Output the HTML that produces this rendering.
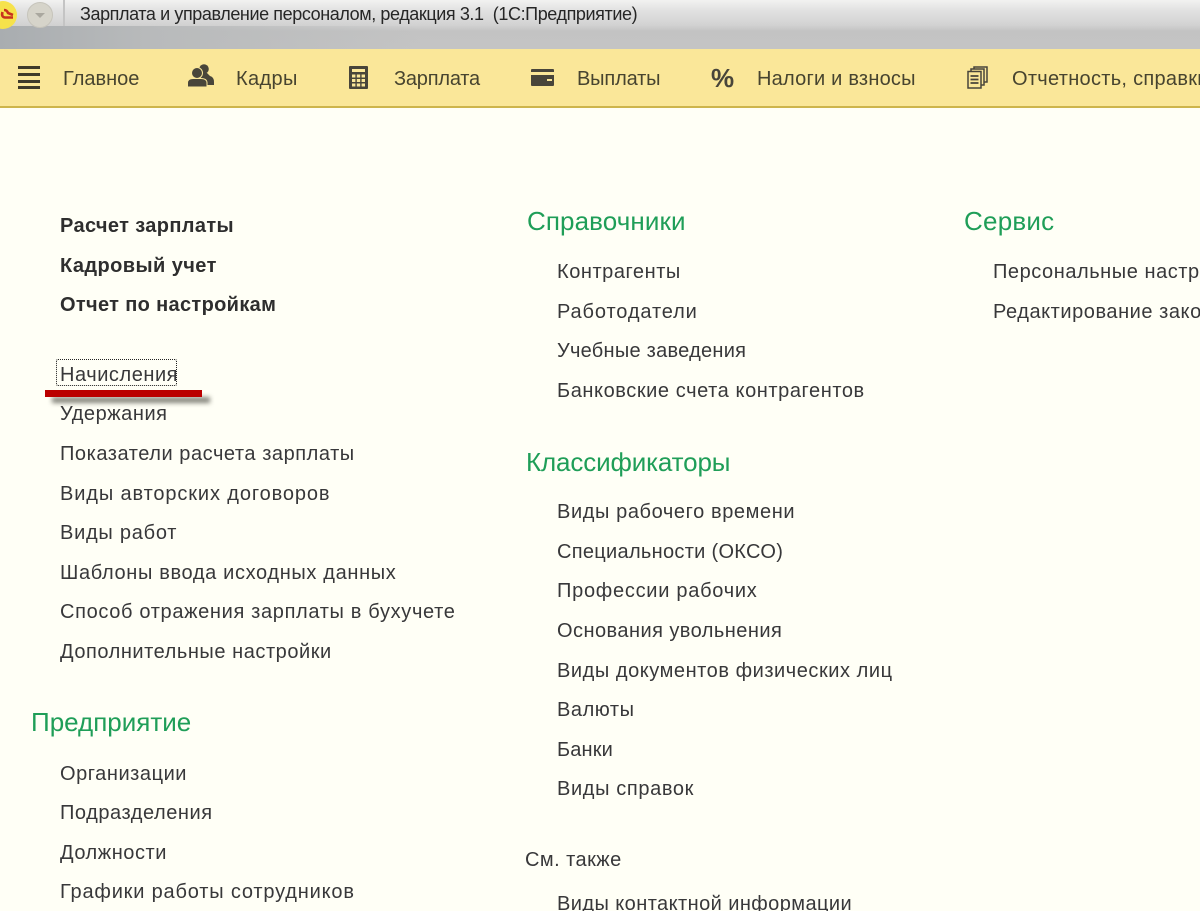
<!DOCTYPE html>
<html lang="ru"><head><meta charset="utf-8"><title>1С</title>
<style>
html,body{margin:0;padding:0;width:1200px;height:911px;overflow:hidden}
#w{position:absolute;left:0;top:0;width:1200px;height:911px;overflow:hidden;background:#fffff6;font-family:"Liberation Sans",sans-serif;color:#38383a}
.t{position:absolute;white-space:nowrap;font-size:20px;line-height:24px;letter-spacing:.55px;filter:blur(.3px)}
.b{font-weight:bold;color:#2e2e2e}
.h{font-size:26px;line-height:30px;color:#1f9e58}
.n{color:#47442f}
#title{position:absolute;left:0;top:0;width:1200px;height:49px;background:linear-gradient(#f2f2f1 0,#e2e2e2 10px,#d2d2d2 25px,#c3c3c3 31px,#c4c4c4 49px)}
#tl{position:absolute;left:0;top:26px;width:420px;height:23px;background:linear-gradient(90deg,#a9adb0,#b8babb 35%,rgba(195,195,195,0))}
#bar{position:absolute;left:0;top:49px;width:1200px;height:57px;background:#fae799;border-bottom:2px solid #cdb54c}
svg{position:absolute}
</style></head><body><div id="w">
<div id="title"></div><div id="tl"></div>
<div style="position:absolute;left:63px;top:0;width:2px;height:26px;background:#c4c4c4"></div>
<svg style="left:0;top:0" width="70" height="40" viewBox="0 0 70 40">
<circle cx="3" cy="15" r="14" fill="#f6e24c"/>
<path d="M4 10 Q7 10 8 13 L13 15" fill="none" stroke="#c8321e" stroke-width="2.600"/>
<path d="M2.500 12 Q1 17 5 17.500 H13" fill="none" stroke="#c8321e" stroke-width="2.600"/>
<circle cx="40" cy="15" r="12.500" fill="#d6d4ca" stroke="#c6c4bb"/>
<path d="M35 13 H45 L40 18Z" fill="#aaa89f"/>
</svg>
<div class="t" style="left:80px;top:2px;font-size:18px;letter-spacing:-.41px;color:#262626">Зарплата и управление персоналом, редакция 3.1&nbsp; (1С:Предприятие)</div>
<div id="bar"></div>

<svg style="left:18px;top:66px" width="22" height="24" viewBox="0 0 22 24" fill="#3f3b2a"><rect y="0" width="22" height="3"/><rect y="7" width="22" height="3"/><rect y="14" width="22" height="3"/><rect y="20" width="22" height="3"/></svg>
<div class="t n" style="left:63px;top:67px;letter-spacing:0">Главное</div>

<svg style="left:187px;top:64px" width="28" height="24" viewBox="0 0 28 24" fill="#48453a"><circle cx="17" cy="5" r="4.800"/><path d="M13 9 H20 Q22 11 23 12 Q27 13 27 18 V21 H15Z"/><g stroke="#fae799" stroke-width="1"><circle cx="10" cy="9" r="5.500"/><path d="M.500 23 V19 Q.500 14.500 6 14.500 H14 Q20 14.500 20 19 V23Z"/></g></svg>
<div class="t n" style="left:236px;top:67px;letter-spacing:.35px">Кадры</div>

<svg style="left:349px;top:66px" width="19" height="23" viewBox="0 0 19 23"><rect width="19" height="23" rx="1" fill="#48453a"/><g fill="#fae799"><rect x="3" y="3" width="13" height="3"/><rect x="3" y="8.500" width="3.400" height="3"/><rect x="7.800" y="8.500" width="3.400" height="3"/><rect x="12.600" y="8.500" width="3.400" height="3"/><rect x="3" y="13" width="3.400" height="3"/><rect x="7.800" y="13" width="3.400" height="3"/><rect x="12.600" y="13" width="3.400" height="3"/><rect x="3" y="17.500" width="3.400" height="3"/><rect x="7.800" y="17.500" width="3.400" height="3"/><rect x="12.600" y="17.500" width="3.400" height="3"/></g></svg>
<div class="t n" style="left:394px;top:67px;letter-spacing:-.2px">Зарплата</div>

<svg style="left:531px;top:69px" width="23" height="18" viewBox="0 0 23 18" fill="#48453a"><path d="M1 0 H22 Q23 0 23 1 V3 H0 V1 Q0 0 1 0Z"/><path d="M0 6 H23 V16 Q23 17 22 17 H1 Q0 17 0 16Z"/><rect x="16" y="10" width="5" height="2" fill="#fae799"/></svg>
<div class="t n" style="left:577px;top:67px;letter-spacing:-.16px">Выплаты</div>

<div class="t" style="left:711px;top:64px;font-size:26px;line-height:28px;font-weight:bold;color:#48453a;letter-spacing:-.5px">%</div>
<div class="t n" style="left:757px;top:67px;letter-spacing:.22px">Налоги и взносы</div>

<svg style="left:967px;top:66px" width="21" height="23" viewBox="0 0 21 23" fill="none" stroke="#48453a" stroke-width="1.500"><rect x="1" y="5.500" width="13" height="16.500"/><path d="M4 5 V3 H17 V19 H14.500M7 3 V1 H20 V16 H17"/><path d="M3.500 10 H11.500 M3.500 13.500 H11.500 M3.500 17 H11.500" stroke-width="1.800"/></svg>
<div class="t n" style="left:1012px;top:67px;width:188px;overflow:hidden;letter-spacing:.29px">Отчетность, справки</div>

<div class="t b" style="left:60px;top:214px;letter-spacing:.37px">Расчет зарплаты</div>
<div class="t b" style="left:60px;top:254px;letter-spacing:.42px">Кадровый учет</div>
<div class="t b" style="left:60px;top:293px;letter-spacing:.34px">Отчет по настройкам</div>

<div style="position:absolute;left:56px;top:359px;width:119px;height:25px;border:1px dotted #222;border-radius:2px"></div>
<div class="t" style="left:60px;top:363px">Начисления</div>
<div style="position:absolute;left:52px;top:397px;width:158px;height:6px;background:#85857c;filter:blur(2.500px)"></div>
<div style="position:absolute;left:45px;top:389.500px;width:157px;height:7.500px;background:#bb0000"></div>
<div class="t" style="left:60px;top:402px">Удержания</div>
<div class="t" style="left:60px;top:442px">Показатели расчета зарплаты</div>
<div class="t" style="left:60px;top:482px;letter-spacing:.88px">Виды авторских договоров</div>
<div class="t" style="left:60px;top:521px;letter-spacing:.75px">Виды работ</div>
<div class="t" style="left:60px;top:561px;letter-spacing:.65px">Шаблоны ввода исходных данных</div>
<div class="t" style="left:60px;top:600px;letter-spacing:.66px">Способ отражения зарплаты в бухучете</div>
<div class="t" style="left:60px;top:640px">Дополнительные настройки</div>

<div class="t h" style="left:31px;top:707px;letter-spacing:0">Предприятие</div>
<div class="t" style="left:60px;top:762px">Организации</div>
<div class="t" style="left:60px;top:801px">Подразделения</div>
<div class="t" style="left:60px;top:841px">Должности</div>
<div class="t" style="left:60px;top:880px;letter-spacing:.82px">Графики работы сотрудников</div>

<div class="t h" style="left:527px;top:206px;letter-spacing:.1px">Справочники</div>
<div class="t" style="left:557px;top:260px">Контрагенты</div>
<div class="t" style="left:557px;top:300px;letter-spacing:.88px">Работодатели</div>
<div class="t" style="left:557px;top:339px;letter-spacing:.26px">Учебные заведения</div>
<div class="t" style="left:557px;top:379px;letter-spacing:.58px">Банковские счета контрагентов</div>

<div class="t h" style="left:526px;top:447px;letter-spacing:-.14px">Классификаторы</div>
<div class="t" style="left:557px;top:500px;letter-spacing:.6px">Виды рабочего времени</div>
<div class="t" style="left:557px;top:540px;letter-spacing:.3px">Специальности (ОКСО)</div>
<div class="t" style="left:557px;top:579px;letter-spacing:.73px">Профессии рабочих</div>
<div class="t" style="left:557px;top:619px;letter-spacing:.45px">Основания увольнения</div>
<div class="t" style="left:557px;top:659px">Виды документов физических лиц</div>
<div class="t" style="left:557px;top:698px">Валюты</div>
<div class="t" style="left:557px;top:738px;letter-spacing:.15px">Банки</div>
<div class="t" style="left:557px;top:777px;letter-spacing:.63px">Виды справок</div>
<div class="t" style="left:525px;top:848px;letter-spacing:.45px">См. также</div>
<div class="t" style="left:557px;top:892px;height:19px;overflow:hidden;letter-spacing:.43px">Виды контактной информации</div>

<div class="t h" style="left:964px;top:206px;letter-spacing:.23px">Сервис</div>
<div class="t" style="left:993px;top:260px;width:207px;overflow:hidden">Персональные настройки</div>
<div class="t" style="left:993px;top:300px;width:207px;overflow:hidden">Редактирование законодательства</div>
</div></body></html>
